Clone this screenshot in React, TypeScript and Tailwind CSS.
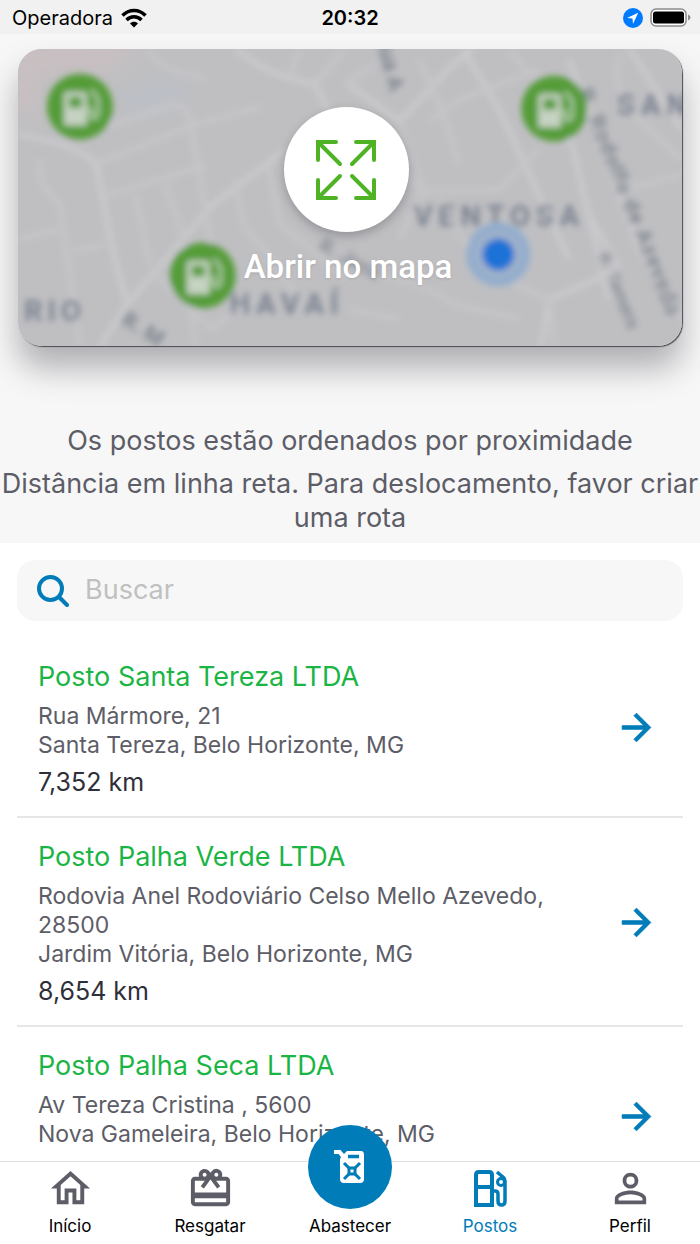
import type { ReactNode } from 'react';
import { MdArrowForward, MdOutlineCardGiftcard, MdOutlineHome, MdPersonOutline } from 'react-icons/md';

const stations = [
  {
    name: 'Posto Santa Tereza LTDA',
    street: 'Rua Mármore, 21',
    district: 'Santa Tereza, Belo Horizonte, MG',
    distance: '7,352 km',
  },
  {
    name: 'Posto Palha Verde LTDA',
    street: 'Rodovia Anel Rodoviário Celso Mello Azevedo, 28500',
    district: 'Jardim Vitória, Belo Horizonte, MG',
    distance: '8,654 km',
  },
  {
    name: 'Posto Palha Seca LTDA',
    street: 'Av Tereza Cristina , 5600',
    district: 'Nova Gameleira, Belo Horizonte, MG',
  },
];

const roads = [
  'M18 135 C50 140 80 148 96 164 C104 200 112 260 128 304 L100 347',
  'M128 304 L212 206 L286 150',
  'M560 110 L574 150 L610 300',
  'M463 49 L500 110 L570 260',
  'M350 85 L400 122 L450 68 L474 49',
  'M570 60 L640 250 L683 320',
  'M630 49 L683 130',
  'M236 49 Q270 78 316 84 Q322 100 330 112',
  'M590 215 L620 270 L550 300 L542 347',
];

const lanes = [
  'M98 164 L192 126',
  'M110 126 L170 106 Q186 104 190 118 L214 260',
  'M192 126 L262 107',
  'M106 196 L200 168 L206 166',
  'M40 160 Q36 185 60 205 L80 347',
  'M74 252 L104 245',
  'M136 196 L150 265',
  'M165 185 L180 225 L196 347',
  'M236 180 Q240 235 262 247 L300 300',
  'M268 165 L280 225 L350 280',
  'M150 49 Q156 72 206 78',
  'M316 84 L345 49',
  'M290 78 L300 49',
  'M345 84 L376 65',
  'M420 60 L440 104 L460 165',
  'M430 120 L465 98 L540 70',
  'M510 49 L530 75',
  'M400 122 L424 192 L500 190 L540 150',
  'M376 150 L424 192 L400 240',
  'M620 55 Q610 90 640 120 L683 160',
  'M550 300 L556 347',
  'M550 300 Q500 280 470 250 L440 200',
  'M350 270 Q420 280 455 305 L520 320',
  'M350 310 L400 320',
  'M150 270 L212 330 L250 300',
  'M18 240 L60 230',
  'M625 190 L683 175',
];

const pins = [
  { x: 80, y: 107 },
  { x: 555, y: 109 },
  { x: 203, y: 276 },
];

function MapPreview() {
  return (
    <svg viewBox="18 49 665 298" preserveAspectRatio="xMidYMid slice" className="block h-full w-full" aria-hidden="true">
      <defs>
        <filter id="soft" x="-5%" y="-5%" width="110%" height="110%">
          <feGaussianBlur stdDeviation="3" />
        </filter>
        <filter id="tint" x="-50%" y="-50%" width="200%" height="200%">
          <feGaussianBlur stdDeviation="9" />
        </filter>
      </defs>
      <rect x="0" y="30" width="700" height="340" fill="#bfbfc2" />
      <g filter="url(#tint)">
        <path d="M10 40 H150 L110 72 L40 75 L38 115 H10 Z" fill="#c8bfc1" />
        <path d="M120 92 L190 80 L185 105 L130 112 Z" fill="#bbbfc6" />
      </g>
      <g filter="url(#soft)">
        <g fill="none" stroke="#cbcbce" strokeWidth="5" strokeLinejoin="round">
          {roads.map((d) => (
            <path key={d} d={d} />
          ))}
        </g>
        <g fill="none" stroke="#c6c6c9" strokeWidth="5" strokeLinejoin="round">
          {lanes.map((d) => (
            <path key={d} d={d} />
          ))}
        </g>
        <g fill="#7c8391" fontFamily="Roboto, sans-serif" fontSize="29" fontWeight="700">
          <text x="618" y="115" letterSpacing="6">SAN</text>
          <text x="414" y="227" letterSpacing="6">VENTOSA</text>
          <text x="230" y="315" letterSpacing="6">HAVAÍ</text>
          <text x="24" y="322" letterSpacing="5">RIO</text>
        </g>
        <g fill="#7f868f" fontFamily="Roboto, sans-serif" fontSize="22" fontWeight="700">
          <text transform="translate(578 92) rotate(68)" letterSpacing="1">R. Rodolfo de Azevedo</text>
          <text transform="translate(598 256) rotate(67)" fontSize="18" fontWeight="500">R. Temera</text>
          <text transform="translate(376 36) rotate(76)">Rua A</text>
          <text transform="translate(120 324) rotate(32)">R. M</text>
          <text transform="translate(318 250) rotate(28)" fontSize="20" fontWeight="500">R. José</text>
        </g>
        {pins.map((pin) => (
          <g key={`${pin.x}-${pin.y}`} transform={`translate(${pin.x} ${pin.y})`}>
            <circle r="33" fill="#549c38" />
            <path
              fill="#c6d2c2"
              fillRule="evenodd"
              d="M-16 -11 Q-16 -15 -12 -15 H3 Q7 -15 7 -11 V19 H-16 Z M-11 -10 V1 H2 V-10 Z"
            />
            <path d="M7 3 H11 V10 Q15 14 18 8 V-8 L11 -17" fill="none" stroke="#a9c79f" strokeWidth="4" />
          </g>
        ))}
        <circle cx="499" cy="255" r="32" fill="#93adcd" />
        <circle cx="499" cy="255" r="23" fill="#a0b2c9" />
        <circle cx="499" cy="255" r="16" fill="#1f72d6" />
      </g>
    </svg>
  );
}

function ExpandIcon() {
  return (
    <svg viewBox="0 0 60 60" className="size-15" fill="none" stroke="#4fb325" strokeWidth="4" strokeLinecap="round" aria-hidden="true">
      <path d="M2 20 V2 H20 M3 3 L24 24" />
      <path d="M40 2 H58 V20 M57 3 L36 24" />
      <path d="M2 40 V58 H20 M3 57 L24 36" />
      <path d="M58 40 V58 H40 M57 57 L36 36" />
    </svg>
  );
}

function WifiIcon() {
  return (
    <svg viewBox="0 0 26 20" className="h-5 w-6.5" fill="none" stroke="black" strokeWidth="3.5" aria-hidden="true">
      <path d="M1.5 7.5 C8 0.8 18 0.8 24.5 7.5" />
      <path d="M5.5 12 C9.8 7.8 16.2 7.8 20.5 12" />
      <path d="M13 19.5 L9 15.5 C11.2 13.3 14.8 13.3 17 15.5 Z" fill="black" stroke="none" />
    </svg>
  );
}

function PumpIcon() {
  return (
    <svg viewBox="0 0 47 47" className="size-[47px]" fill="none" stroke="currentColor" strokeWidth="4" aria-hidden="true">
      <path d="M9 40 V10 Q9 7 12 7 H22 Q25 7 25 10 V40 Z M9 22 H25" />
      <path d="M25 26 H28 Q31 26 31 29 V36 Q31 40 34.5 40 Q38 40 38 36 V16 Q38 14 36.5 12.5 L30 7" strokeWidth="3.5" />
      <circle cx="34" cy="17" r="3.5" strokeWidth="3" />
    </svg>
  );
}

function JerrycanIcon() {
  return (
    <svg viewBox="0 0 32 36" className="h-9 w-8" aria-hidden="true">
      <path
        fill="white"
        d="M0 1 H6.5 L10 5 L13 2 H27 Q30 2 30 6 V30 Q30 34 26 34 H10 Q6 34 6 30 V10 L7 8 L4.5 5 H0 Z"
      />
      <g fill="none" stroke="#007cb9" strokeWidth="3">
        <path d="M14 7.5 H25" strokeWidth="3.5" />
        <path d="M15 19 H21 V25 H15 Z" />
        <path d="M15 19 L10 14 M21 19 L26 14 M15 25 L10 30 M21 25 L26 30" />
      </g>
    </svg>
  );
}

function StatusBar() {
  return (
    <header className="grid h-[34px] shrink-0 grid-cols-3 items-center bg-[#f1f1f1] px-3 pt-px text-xl text-black">
      <div className="flex items-center gap-2">
        <span>Operadora</span>
        <WifiIcon />
      </div>
      <span className="text-center font-semibold">20:32</span>
      <div className="-mr-1 flex items-center justify-end gap-[7px]">
        <svg viewBox="0 0 20 20" className="size-5" aria-hidden="true">
          <circle cx="10" cy="10" r="10" fill="#007aff" />
          <path d="M15.2 4.8 L4 10 L9.5 10.5 L10 16 Z" fill="white" />
        </svg>
        <svg viewBox="0 0 42 20" className="h-5 w-[42px]" aria-hidden="true">
          <rect x="1" y="1" width="35" height="17" rx="5" fill="white" stroke="#8c8c8c" strokeWidth="1.5" />
          <rect x="3" y="3.5" width="31" height="12" rx="2.5" fill="black" />
          <path d="M38 6.5 Q40.5 7.5 40.5 9.5 Q40.5 11.5 38 12.5 Z" fill="#8c8c8c" />
        </svg>
      </div>
    </header>
  );
}

function Tab({ label, icon, active }: { label: string; icon: ReactNode; active?: boolean }) {
  return (
    <a href="#" className={active ? 'flex flex-1 flex-col items-center text-[#007cb9]' : 'flex flex-1 flex-col items-center text-[#5d5d67]'}>
      {icon}
      <span className={active ? 'text-[#007cb9]' : 'text-black'}>{label}</span>
    </a>
  );
}

export default function App() {
  return (
    <div className="flex h-screen flex-col overflow-hidden bg-white font-['Inter',sans-serif]">
      <StatusBar />

      <main className="min-h-0 flex-1 overflow-hidden">
        {/* Map banner */}
        <section className="overflow-hidden bg-[#f7f7f7] px-[18px] pt-[15px] pb-2">
          <button
            type="button"
            className="relative block h-[297px] w-full overflow-hidden rounded-3xl shadow-[1px_1px_1px_#4a4a50,0_22px_32px_rgba(50,50,60,0.36)]"
          >
            <MapPreview />
            <span className="absolute inset-0 flex flex-col items-center pt-[58px] pr-2">
              <span className="flex size-[125px] items-center justify-center rounded-full bg-white shadow-[0_4px_10px_rgba(50,50,60,0.3)]">
                <ExpandIcon />
              </span>
              <span className="mt-[15px] pl-1 font-['Roboto',sans-serif] text-[33px] leading-10 font-medium text-white [text-shadow:0_1px_3px_rgba(0,0,0,0.12)]">
                Abrir no mapa
              </span>
            </span>
          </button>

          <div className="-mx-[18px] mt-[78px] text-center text-[27px] leading-[34px] text-[#5d5d67]">
            <p>Os postos estão ordenados por proximidade</p>
            <p className="mt-[9px]">Distância em linha reta. Para deslocamento, favor criar uma rota</p>
          </div>
        </section>

        {/* Search */}
        <div className="mx-[17px] mt-[17px] flex h-[61px] items-center gap-4 rounded-[18px] bg-[#f7f7f7] px-5">
          <label htmlFor="search" aria-label="Buscar">
            <svg viewBox="0 0 32 32" className="size-8" fill="none" stroke="#007cb9" strokeWidth="4" strokeLinecap="round" aria-hidden="true">
              <circle cx="13.5" cy="13.5" r="11.5" />
              <path d="M22 22 L30 30" />
            </svg>
          </label>
          <input
            id="search"
            type="search"
            placeholder="Buscar"
            className="min-w-0 flex-1 bg-transparent text-[27px] text-[#2f2f39] outline-none placeholder:text-[#c0c0c0]"
          />
        </div>

        {/* Stations */}
        <ul className="mx-[17px] mt-[17px]">
          {stations.map((station) => (
            <li key={station.name} className="border-b-2 border-[#e6e6e8]">
              <a href="#" className="flex items-center gap-5 pt-5 pr-[25px] pb-[19px] pl-[21px]">
                <div className="min-w-0 flex-1">
                  <h2 className="text-[27px] leading-[38px] text-[#1bb545]">{station.name}</h2>
                  <p className="mt-[6px] text-[23px] leading-[29px] text-[#5d5d67]">
                    {station.street}
                    <br />
                    {station.district}
                  </p>
                  <p className="mt-2 min-h-[29px] text-[25px] leading-[29px] text-[#2f2f39]">{station.distance}</p>
                </div>
                <MdArrowForward className="size-[43px] shrink-0 text-[#007cb9] [&>path:last-child]:stroke-current [&>path:last-child]:stroke-[0.5]" />
              </a>
            </li>
          ))}
        </ul>
      </main>

      {/* Tab bar */}
      <nav className="flex h-[83px] shrink-0 border-t border-[#e2e2e4] bg-white pt-[3px] text-[17px] leading-7">
        <Tab label="Início" icon={<MdOutlineHome className="size-[47px]" />} />
        <Tab label="Resgatar" icon={<MdOutlineCardGiftcard className="size-[47px]" />} />
        <a href="#" className="relative flex flex-1 flex-col items-center pt-[47px] text-black">
          <span className="absolute -top-10 flex size-[84px] items-center justify-center rounded-full bg-[#007cb9]">
            <JerrycanIcon />
          </span>
          Abastecer
        </a>
        <Tab label="Postos" active icon={<PumpIcon />} />
        <Tab label="Perfil" icon={<MdPersonOutline className="size-[47px]" />} />
      </nav>
    </div>
  );
}
